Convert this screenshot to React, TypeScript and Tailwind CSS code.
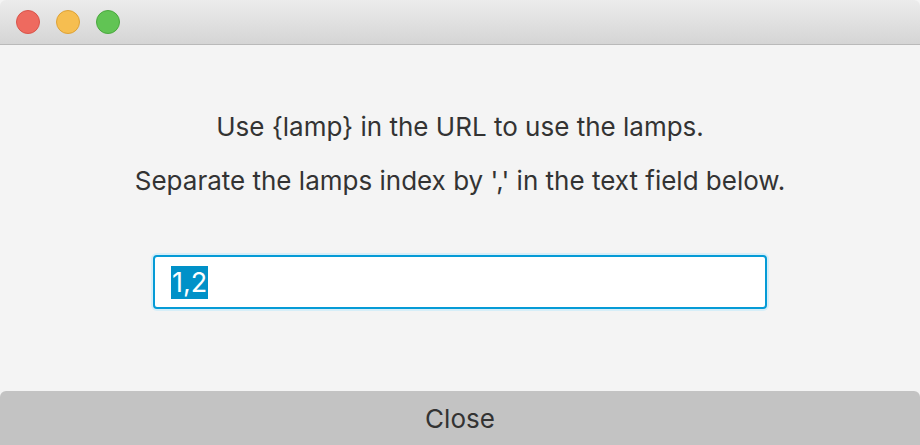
export default function App() {
  return (
    <div
      className="w-[920px] h-[445px] flex flex-col bg-[#f4f4f4] overflow-hidden"
      style={{ fontFamily: "Inter, 'Noto Sans', sans-serif" }}
    >
      <div className="h-[45px] shrink-0 flex items-center gap-4 pl-4 rounded-t-[6px] bg-gradient-to-b from-[#ececec] to-[#d5d5d5] border-b border-[#b9b9b9]">
        <span className="w-6 h-6 rounded-full bg-[#ee6a5f] border border-[#d9544a]" />
        <span className="w-6 h-6 rounded-full bg-[#f6be50] border border-[#dea236]" />
        <span className="w-6 h-6 rounded-full bg-[#61c454] border border-[#4aa83e]" />
      </div>
      <div className="flex-1 flex flex-col items-center text-[#333] text-[26px]">
        <p className="mt-[67px] leading-[30px]">Use {"{lamp}"} in the URL to use the lamps.</p>
        <p className="mt-[24px] leading-[30px]">Separate the lamps index by ',' in the text field below.</p>
        <div className="mt-[59px] w-[614px] h-[54px] rounded-[4px] border-2 border-[#059bd6] bg-white shadow-[0_0_0_2px_#d6eef8] flex items-center pl-[16px]">
          <span className="bg-[#0091c8] text-white text-[27px] leading-[33px] px-[1px]">1,2</span>
        </div>
      </div>
      <button className="h-[54px] shrink-0 w-full rounded-t-[6px] bg-[#c3c3c3] text-[#333] text-[26px]">
        Close
      </button>
    </div>
  );
}
